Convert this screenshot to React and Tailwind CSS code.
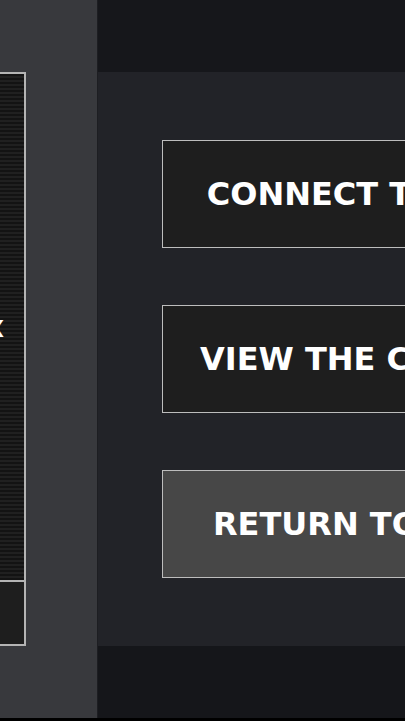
import React from 'react';

const menu = [
    { label: 'CONNECT TO SERVER', tone: 'bg-[#1e1e1e]' },
    { label: 'VIEW THE CATALOGUE', tone: 'bg-[#1e1e1e]' },
    { label: 'RETURN TO HANGAR', tone: 'bg-[#474747]' },
];

function SidePanel() {
    return (
        <aside className="w-[98px] h-[718px] shrink-0 bg-[#38393d] border-r border-[#1d1e22] pt-[72px]">
            <div className="-ml-[100px] w-[126px] h-[574px] border-2 border-[#b4b4b4] flex flex-col">
                {/* scanline screen */}
                <div className="flex-1 flex items-center justify-end pr-[20px] pt-[4px] bg-[repeating-linear-gradient(180deg,#131313_0px,#131313_2px,#202020_2px,#202020_4px)]">
                    <span className="text-white font-bold text-[23px] leading-none">MAILBOX</span>
                </div>
                <div className="h-[64px] shrink-0 border-t-2 border-[#b4b4b4] bg-[#1e1e1e]" />
            </div>
        </aside>
    );
}

function MenuButton({ label, tone }) {
    return (
        <button
            className={`w-[473px] h-[108px] shrink-0 flex items-center justify-center border border-[#bdbdbd] ${tone} text-white font-bold text-[32px] leading-none whitespace-nowrap`}
        >
            {label}
        </button>
    );
}

export default function App() {
    return (
        <div className="w-[405px] h-[721px] overflow-hidden bg-black flex items-start font-['DejaVu_Sans',sans-serif]">
            <SidePanel />
            <main className="flex-1 min-w-0 h-[718px] flex flex-col overflow-hidden">
                <div className="h-[72px] shrink-0 bg-[#16171b]" />
                <div className="h-[574px] shrink-0 bg-[#222328] flex flex-col items-start gap-[57px] pt-[68px] pl-[64px]">
                    {menu.map((item) => (
                        <MenuButton key={item.label} {...item} />
                    ))}
                </div>
                <div className="flex-1 bg-[#15161a]" />
            </main>
        </div>
    );
}
